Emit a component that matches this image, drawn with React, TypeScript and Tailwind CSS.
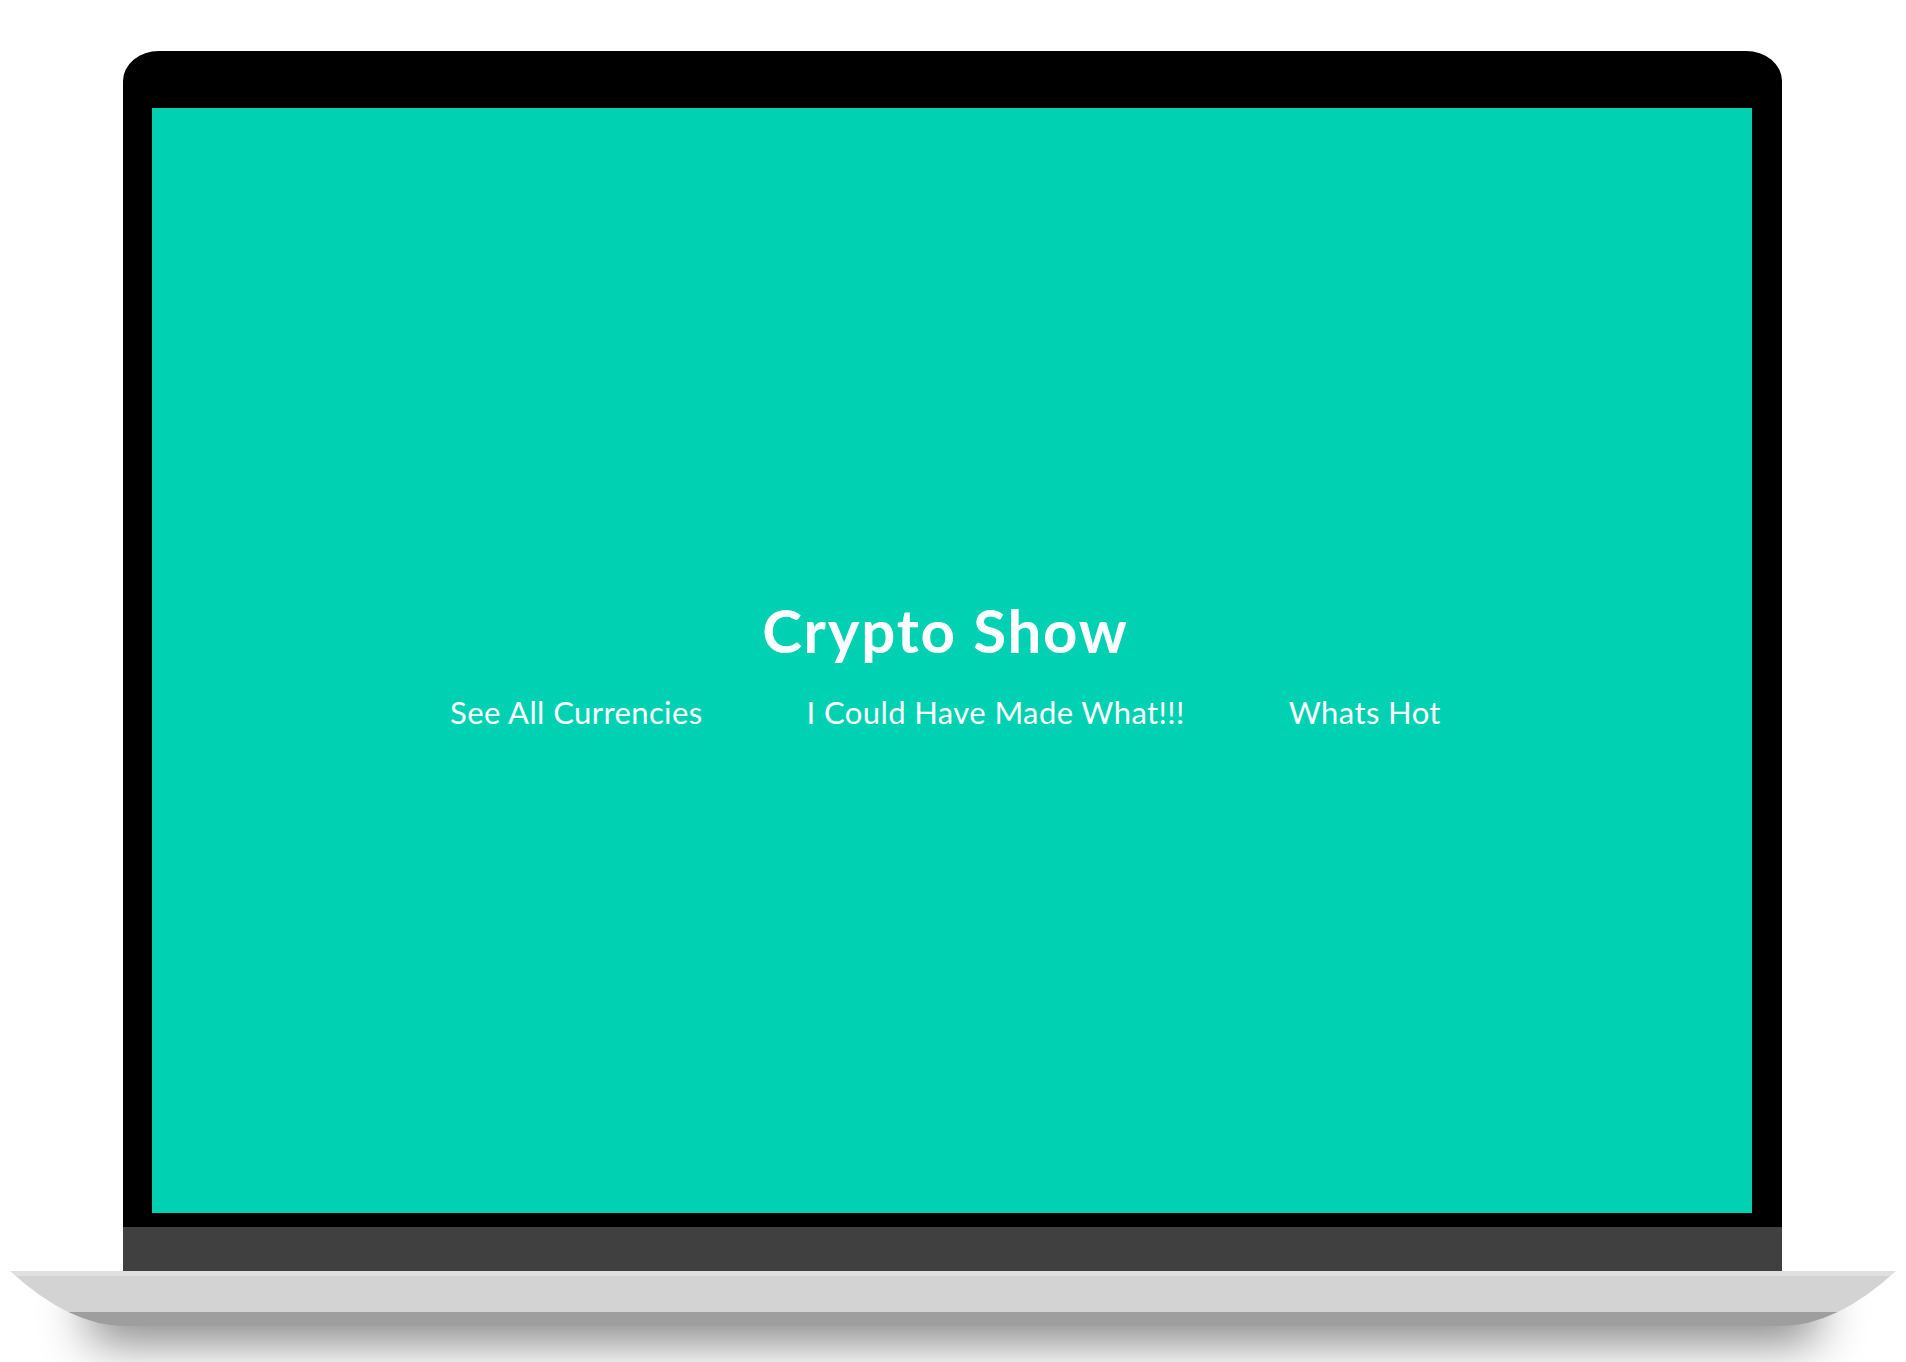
import React from "react";

const links = ["See All Currencies", "I Could Have Made What!!!", "Whats Hot"];

const LaptopBase = () => (
  <svg width="1906" height="91" viewBox="0 0 1906 91" className="block shrink-0">
    <defs>
      <linearGradient id="baseFill" x1="0" y1="0" x2="0" y2="55" gradientUnits="userSpaceOnUse">
        <stop offset="0" stopColor="#e0e0e0" />
        <stop offset="0.09" stopColor="#e0e0e0" />
        <stop offset="0.09" stopColor="#d3d3d3" />
        <stop offset="0.745" stopColor="#d3d3d3" />
        <stop offset="0.745" stopColor="#9e9e9e" />
        <stop offset="1" stopColor="#9e9e9e" />
      </linearGradient>
      <filter id="baseShadow" x="-10%" y="-200%" width="120%" height="500%">
        <feGaussianBlur stdDeviation="25" />
      </filter>
    </defs>
    <rect x="90" y="10" width="1726" height="60" fill="#000" opacity="0.5" filter="url(#baseShadow)" />
    <path d="M10 0 H1896 Q1836 55 1781 55 H125 Q70 55 10 0 Z" fill="url(#baseFill)" />
  </svg>
);

export default function App() {
  return (
    <div
      className="w-full h-[1362px] bg-white overflow-hidden flex flex-col pt-[51px]"
      style={{ fontFamily: "Lato, 'Open Sans', sans-serif" }}
    >
      <div className="ml-[123px] w-[1659px] bg-black rounded-tl-[36px_30px] rounded-tr-[36px_30px] pt-[57px] pl-[29px] pr-[30px] pb-[14px]">
        <div className="h-[1105px] bg-[#00d1b2] flex flex-col items-center justify-center pt-[6px] pr-[13px] text-white">
          <h1 className="text-[60px] leading-[60px] font-bold tracking-[1.8px]">Crypto Show</h1>
          <nav className="flex gap-[104px] mt-[37px]">
            {links.map((l) => (
              <a key={l} href="#" className="text-[31px] leading-[31px] font-normal tracking-[0.4px]">
                {l}
              </a>
            ))}
          </nav>
        </div>
      </div>
      <div className="ml-[123px] w-[1659px] h-[44px] bg-[#404040] shrink-0" />
      <LaptopBase />
    </div>
  );
}
